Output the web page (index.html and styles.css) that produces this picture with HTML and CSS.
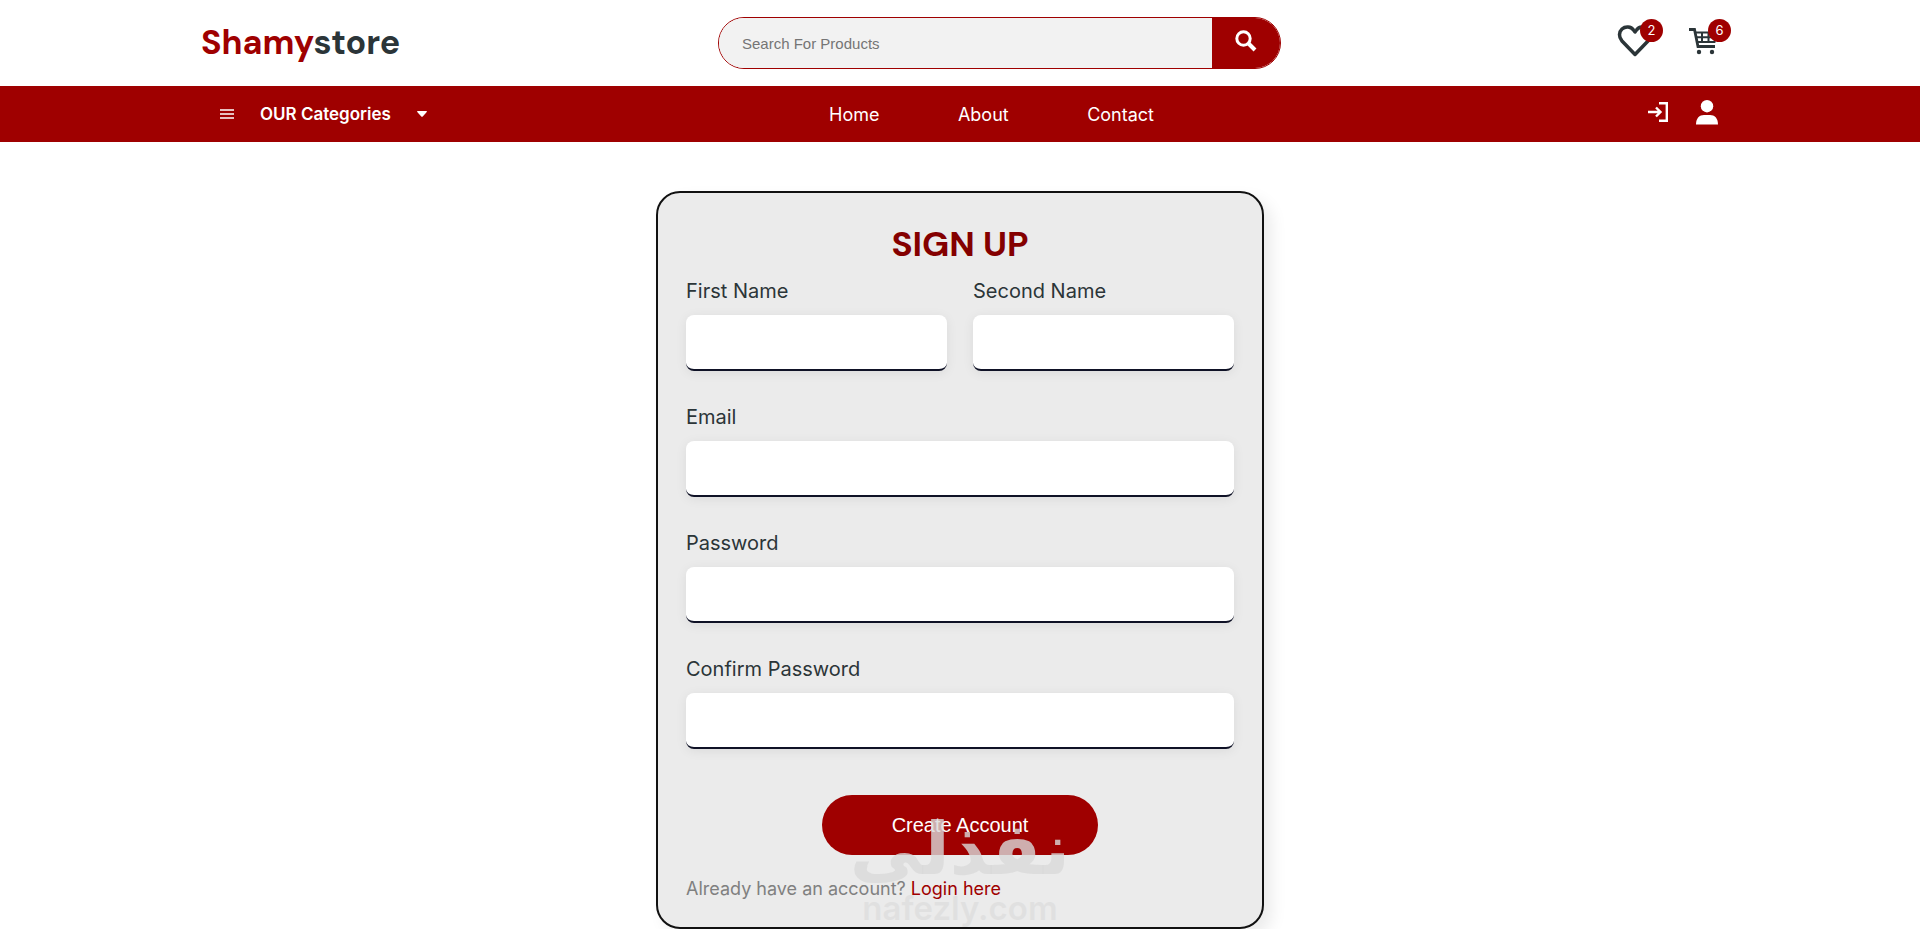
FILE: index.html
```
<!DOCTYPE html>
<html lang="en">

<head>
    <meta charset="UTF-8">
    <meta name="viewport" content="width=device-width, initial-scale=1.0">
    <title>Shamystore - Sign Up</title>
    <link rel="stylesheet" href="styles.css">
</head>

<body>
    <header>
        <div class="top-header container">
            <a href="#" class="logo"><span>Shamy</span>store</a>
            <form class="search-box" role="search">
                <input type="text" placeholder="Search For Products" aria-label="Search For Products">
                <button type="submit" aria-label="Search">
                    <svg width="22" height="22" viewBox="0 0 22 22" fill="none" stroke="currentColor">
                        <circle cx="8.5" cy="8.5" r="6.7" stroke-width="3" />
                        <path d="M13 13l7 7" stroke-width="4" />
                    </svg>
                </button>
            </form>
            <div class="header-icons">
                <a href="#" class="icon" aria-label="Wishlist">
                    <svg width="36" height="36" viewBox="0 0 36 36" fill="none" stroke="currentColor"
                        stroke-width="3.5" stroke-linejoin="round">
                        <path d="M18 31.500L5 18C1.500 14 1.800 9 5 6C8.500 3 14 3.500 16.500 7L18 9L19.500 7C22 3.500 27.500 3 31 6C34.200 9 34.500 14 31 18Z" />
                    </svg>
                    <span class="count">2</span>
                </a>
                <a href="#" class="icon" aria-label="Cart">
                    <svg width="32" height="28" viewBox="0 0 32 28" fill="none" stroke="currentColor">
                        <path d="M0 2.500H5.500L9 19.500H26" stroke-width="2.800" />
                        <path d="M6 5.500H28L25.500 15H8M7 10.300H26M13 6V15M19.500 6V15" stroke-width="2" />
                        <circle cx="10" cy="25" r="2.200" fill="currentColor" stroke="none" />
                        <circle cx="23" cy="25" r="2.200" fill="currentColor" stroke="none" />
                    </svg>
                    <span class="count">6</span>
                </a>
            </div>
        </div>

        <nav class="bottom-header">
            <div class="nav-row container">
                <button type="button" class="category-btn">
                    <svg width="14" height="10" viewBox="0 0 14 10" stroke="currentColor">
                        <path d="M0 1H14M0 5H14M0 9H14" stroke-width="1.500" />
                    </svg>
                    <span>OUR Categories</span>
                    <svg width="10" height="6" viewBox="0 0 10 6" fill="currentColor">
                        <path d="M0.500 0H9.500L10 0.700L5.500 5.700H4.500L0 0.700Z" />
                    </svg>
                </button>
                <div class="nav-links">
                    <a href="#">Home</a>
                    <a href="#">About</a>
                    <a href="#">Contact</a>
                </div>
                <div class="user-links">
                    <a href="#" aria-label="Login">
                        <svg width="20" height="20" viewBox="0 0 20 20" fill="none" stroke="currentColor"
                            stroke-width="2.400">
                            <path d="M11 1.200H18.800V18.800H11M0 10H12M8 5.500L12.500 10L8 14.500" />
                        </svg>
                    </a>
                    <a href="#" aria-label="Account">
                        <svg width="22" height="25" viewBox="0 0 22 25" fill="currentColor">
                            <circle cx="11" cy="6.200" r="6.200" />
                            <path d="M0 24.500C0 18 3.500 15 8 15H14C18.500 15 22 18 22 24.500Z" />
                        </svg>
                    </a>
                </div>
            </div>
        </nav>
    </header>

    <main>
        <form class="signup">
            <h1>SIGN UP</h1>
            <div class="name-row">
                <div class="field">
                    <label for="firstName">First Name</label>
                    <input type="text" id="firstName">
                </div>
                <div class="field">
                    <label for="secondName">Second Name</label>
                    <input type="text" id="secondName">
                </div>
            </div>
            <div class="field">
                <label for="email">Email</label>
                <input type="email" id="email">
            </div>
            <div class="field">
                <label for="password">Password</label>
                <input type="password" id="password">
            </div>
            <div class="field">
                <label for="confirmPassword">Confirm Password</label>
                <input type="password" id="confirmPassword">
            </div>
            <button type="submit" class="submit-btn">Create Account</button>
            <p class="login-text">Already have an account? <a href="#">Login here</a></p>
        </form>
    </main>

    <div class="watermark">
        <span class="watermark-name" lang="ar" dir="rtl">نفذلى</span>
        <span class="watermark-url">nafezly.com</span>
    </div>
</body>

</html>
```
FILE: styles.css
```
* {
    margin: 0;
    padding: 0;
    box-sizing: border-box;
    font-family: Inter, "Liberation Sans", sans-serif;
}

body {
    background-color: #fff;
    color: #2b3538;
}

a {
    text-decoration: none;
    color: inherit;
}

svg {
    display: block;
}

.container {
    width: 80%;
    margin: 0 auto;
}

/* top header */
.top-header {
    display: grid;
    grid-template-columns: 517px 563px 1fr;
    align-items: center;
    padding: 17px 0;
    padding-left: 9px;
}

.logo {
    font-family: "DM Sans", Inter, sans-serif;
    font-size: 34px;
    line-height: 52px;
    font-weight: 700;
}

.logo span {
    font-family: inherit;
    color: #9f0000;
}

.search-box {
    display: flex;
    height: 52px;
    border: 1px solid #9f0000;
    border-radius: 26px;
    overflow: hidden;
}

.search-box input {
    flex: 1;
    min-width: 0;
    padding: 0 23px;
    border: none;
    outline: none;
    background-color: #f2f2f2;
    font-family: "Liberation Sans", sans-serif;
    font-size: 15px;
}

.search-box input::placeholder {
    color: #757575;
    font-family: inherit;
}

.search-box button {
    width: 68px;
    padding: 0 0 4px 23px;
    border: none;
    background-color: #9f0000;
    color: white;
    cursor: pointer;
}

.header-icons {
    display: flex;
    justify-content: flex-end;
    align-items: center;
    gap: 36px;
    padding: 0 7px 4px 0;
}

.icon {
    display: flex;
    align-items: center;
    height: 36px;
    position: relative;
}

.count {
    position: absolute;
    top: -4px;
    right: -10px;
    width: 23px;
    border-radius: 50%;
    background-color: #9f0000;
    color: white;
    font-size: 13px;
    line-height: 23px;
    text-align: center;
}

/* navigation */
.bottom-header {
    background-color: #9f0000;
    color: white;
}

.nav-row {
    display: grid;
    grid-template-columns: 637px 325px 1fr;
    align-items: center;
    height: 56px;
}

.category-btn {
    display: flex;
    align-items: center;
    gap: 26px;
    padding-left: 28px;
    border: none;
    background: none;
    color: white;
    font-size: 17px;
    font-weight: 600;
    cursor: pointer;
}

.nav-links {
    display: flex;
    justify-content: space-between;
    font-size: 18px;
}

.user-links {
    display: flex;
    justify-content: flex-end;
    align-items: center;
    gap: 28px;
    padding: 0 10px 4px 0;
}

/* sign up form */
.signup {
    width: 608px;
    max-width: 100%;
    margin: 49px auto 0;
    padding: 28px 28px 24px;
    border: 2px solid #111;
    border-radius: 24px;
    background-color: #ebebeb;
    box-shadow: 8px 8px 16px rgba(0, 0, 0, 0.08);
}

.signup h1 {
    margin-bottom: 10px;
    color: #840000;
    font-family: "DM Sans", Inter, sans-serif;
    font-size: 35px;
    line-height: 46px;
    font-weight: 700;
    text-align: center;
}

.name-row {
    display: flex;
    gap: 26px;
}

.field {
    flex: 1;
    margin-bottom: 32px;
}

.field label {
    display: block;
    margin-bottom: 10px;
    font-size: 20px;
    line-height: 28px;
}

.field input {
    display: block;
    width: 100%;
    height: 56px;
    padding: 0 16px;
    border: none;
    border-bottom: 2px solid #0f1226;
    border-radius: 8px;
    outline: none;
    background-color: white;
    box-shadow: 0 2px 12px rgba(0, 0, 0, 0.07);
    font-size: 18px;
}

.submit-btn {
    display: block;
    width: 276px;
    height: 60px;
    margin: 46px auto 20px;
    border: none;
    border-radius: 30px;
    background-color: #9f0000;
    color: white;
    font-family: "Liberation Sans", sans-serif;
    font-size: 20px;
    cursor: pointer;
}

.login-text {
    color: #808080;
    font-size: 18px;
    line-height: 28px;
}

.login-text a {
    color: #9f0000;
}

/* watermark over the page */
.watermark {
    position: absolute;
    top: 808px;
    left: 0;
    right: 0;
    display: flex;
    flex-direction: column;
    align-items: center;
    pointer-events: none;
}

.watermark-name {
    color: rgba(218, 218, 218, 0.8);
    font-family: "DejaVu Sans", sans-serif;
    font-size: 72px;
    line-height: 82px;
    font-weight: 700;
}

.watermark-url {
    color: rgba(218, 218, 218, 0.6);
    font-size: 33px;
    line-height: 36px;
    font-weight: 600;
}
```
